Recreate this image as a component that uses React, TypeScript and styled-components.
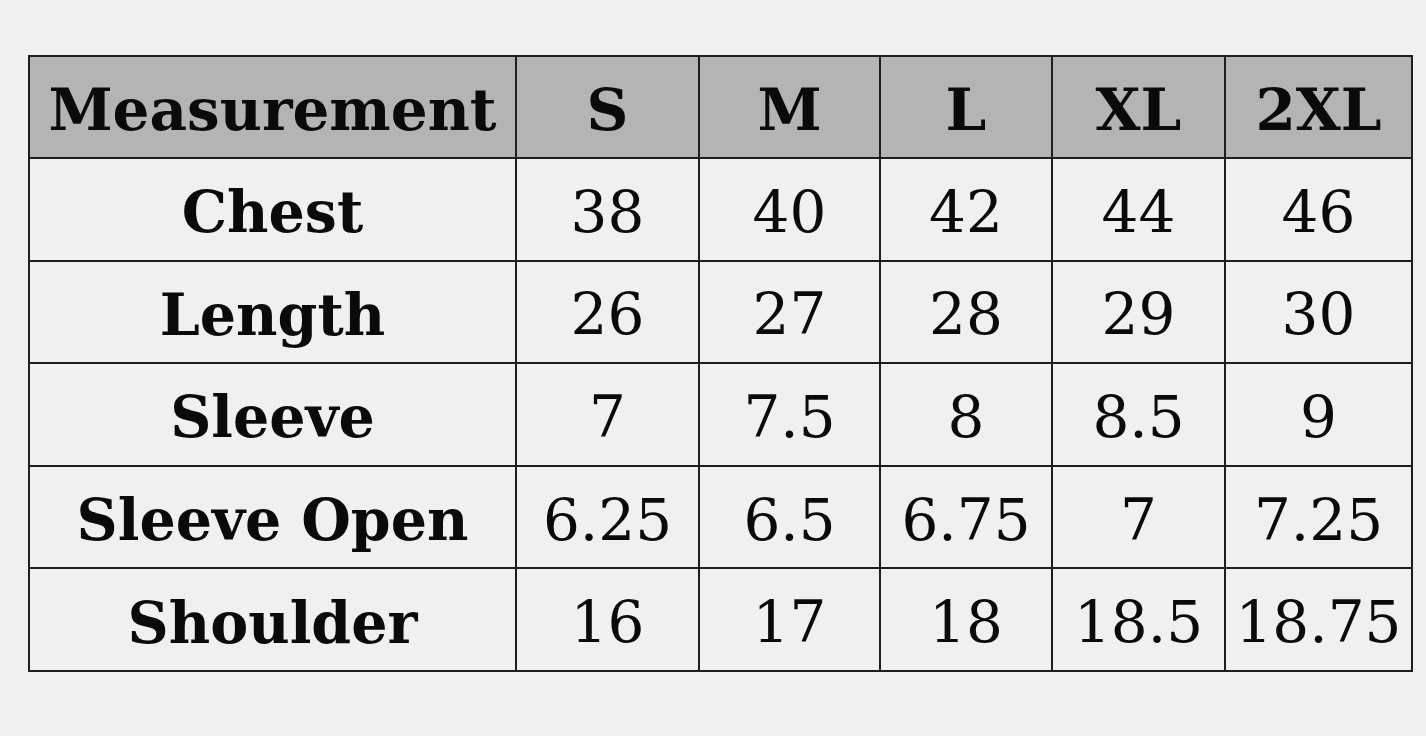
import React from "react";
import styled, { createGlobalStyle } from "styled-components";

const GlobalStyle = createGlobalStyle`
  html, body {
    margin: 0;
    padding: 0;
    background: #f0f0f0;
  }
`;

const sizes = ["S", "M", "L", "XL", "2XL"];

const rows: [string, string[]][] = [
  ["Chest", ["38", "40", "42", "44", "46"]],
  ["Length", ["26", "27", "28", "29", "30"]],
  ["Sleeve", ["7", "7.5", "8", "8.5", "9"]],
  ["Sleeve Open", ["6.25", "6.5", "6.75", "7", "7.25"]],
  ["Shoulder", ["16", "17", "18", "18.5", "18.75"]],
];

const colWidths = [487, 183, 181, 172, 173, 187];

function App() {
  return (
    <Page>
      <GlobalStyle />
      <Table>
        <colgroup>
          {colWidths.map((w, i) => (
            <col key={i} style={{ width: w }} />
          ))}
        </colgroup>
        <thead>
          <tr>
            <HeadCell>Measurement</HeadCell>
            {sizes.map((s) => (
              <HeadCell key={s}>{s}</HeadCell>
            ))}
          </tr>
        </thead>
        <tbody>
          {rows.map(([name, values]) => (
            <Row key={name}>
              <LabelCell>{name}</LabelCell>
              {values.map((v, i) => (
                <ValueCell key={i}>{v}</ValueCell>
              ))}
            </Row>
          ))}
        </tbody>
      </Table>
    </Page>
  );
}

const Page = styled.div`
  width: 1426px;
  height: 736px;
  padding: 55px 0 0 28px;
  box-sizing: border-box;
  background: #f0f0f0;
`;

const Table = styled.table`
  border-collapse: collapse;
  table-layout: fixed;
  width: 1383px;
  font-family: "DejaVu Serif", "Liberation Serif", serif;
  color: #0a0a0a;
  border: 2px solid #1a1a1a;
`;

const Row = styled.tr`
  height: 102.6px;
`;

const Cell = styled.td`
  box-sizing: border-box;
  height: 102.6px;
  border: 2px solid #1e1e1e;
  text-align: center;
  vertical-align: middle;
  padding: 5px 0 0;
  white-space: nowrap;
  line-height: 1;
`;

const HeadCell = styled(Cell).attrs({ as: "th" })`
  height: 102px;
  background: #b4b4b4;
  font-weight: 700;
  font-size: 58px;
`;

const LabelCell = styled(Cell)`
  font-weight: 700;
  font-size: 57px;
`;

const ValueCell = styled(Cell)`
  font-weight: 400;
  font-size: 58px;
`;

export default App;
